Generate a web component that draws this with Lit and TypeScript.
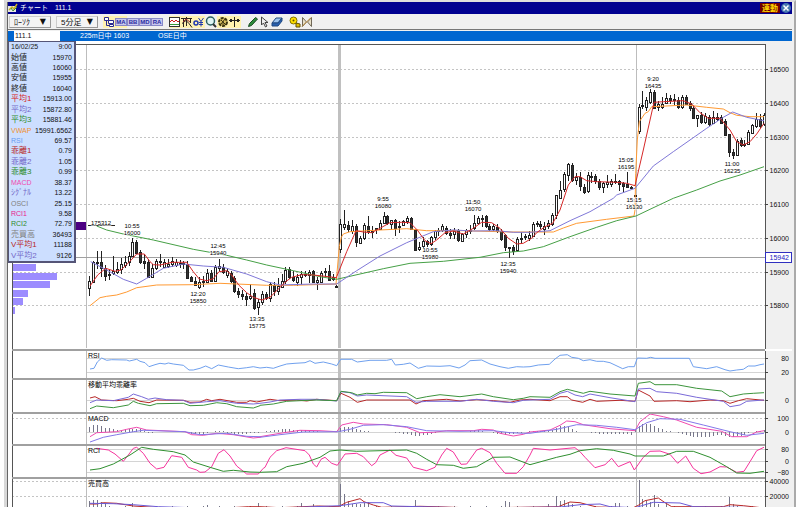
import { LitElement, html, svg, css } from "lit";
import { customElement, property } from "lit/decorators.js";
import { classMap } from "lit/directives/class-map.js";

type Point = [number, number];
// high, open, close, low
type Candle = [number, number, number, number];

interface Trace {
  color: string;
  // each block has its own origin, points are in thirds of a unit
  blocks: { origin: Point; points: Point[] }[];
}

interface Pane {
  title: string;
  top: number;
  height: number;
  dashed?: [number, string][];
  solid?: [number, string][];
  traces: Trace[];
  bars?: { zero: number; values: number[] };
}

const LEFT = 12;
const RIGHT = 765;
const WIDTH = 780;
const FIRST_BAR = 89.3;
const PITCH = 3.923;

const barX = (i: number) => FIRST_BAR + i * PITCH;
const priceY = (p: number) => 69.5 + (16500 - p) * 0.3375;

// "x,y x,y ..." to points
const pts = (s: string): Point[] =>
  s
    .trim()
    .split(/\s+/)
    .map(p => p.split(",").map(Number) as Point);

const trace = (color: string, ...blocks: [number, number, string][]): Trace => ({
  color,
  blocks: blocks.map(([x, y, s]) => ({ origin: [x, y], points: pts(s) })),
});

const linePoints = (t: Trace) =>
  t.blocks
    .flatMap(b =>
      b.points.map(
        ([x, y]) =>
          `${(b.origin[0] + x / 3).toFixed(1)},${(b.origin[1] + y / 3).toFixed(1)}`
      )
    )
    .join(" ");

// prices are stored as points below the session base
const SESSIONS: { base: number; candles: Candle[] }[] = [
  {
    base: 16174,
    candles: [
      [286, 322, 300, 345], [240, 303, 244, 303], [213, 246, 243, 265], [213, 243, 262, 290],
      [253, 262, 287, 300], [268, 279, 282, 299], [228, 277, 272, 283], [245, 272, 264, 280],
      [232, 265, 250, 280], [228, 252, 244, 262], [215, 244, 226, 255], [174, 226, 184, 230],
      [180, 184, 216, 222], [208, 216, 246, 250], [220, 240, 245, 265], [235, 245, 288, 290],
      [250, 288, 262, 292], [234, 262, 240, 268], [222, 240, 244, 260], [235, 258, 243, 262],
      [235, 257, 250, 262], [230, 250, 240, 260], [236, 252, 243, 258], [238, 246, 250, 262],
      [240, 252, 248, 265], [240, 250, 292, 295], [285, 290, 302, 305], [290, 300, 312, 315],
      [290, 317, 303, 325], [285, 302, 305, 318], [265, 304, 276, 308], [268, 276, 300, 304],
      [252, 300, 260, 303], [234, 262, 256, 275], [250, 260, 276, 280], [262, 285, 272, 292],
      [272, 278, 303, 308], [285, 292, 330, 335], [320, 330, 340, 352], [328, 340, 346, 358],
      [335, 346, 355, 375], [310, 350, 345, 358], [325, 337, 382, 388], [355, 376, 362, 400],
      [330, 364, 340, 372], [332, 340, 352, 358], [305, 352, 310, 364], [305, 312, 330, 345],
      [292, 330, 315, 342], [280, 318, 300, 322], [258, 302, 268, 310], [260, 265, 290, 296],
      [270, 290, 300, 305], [280, 302, 288, 315], [272, 288, 280, 312], [270, 284, 280, 290],
      [268, 282, 273, 306], [268, 272, 304, 306], [290, 304, 298, 328], [270, 302, 276, 308],
      [262, 276, 272, 290], [254, 270, 296, 300], [280, 290, 296, 300], [312, 314, 315, 316],
    ],
  },
  {
    base: 16173,
    candles: [
      [115, 205, 132, 218], [88, 140, 132, 148], [122, 135, 148, 155], [118, 152, 138, 160],
      [132, 138, 184, 198], [165, 186, 172, 190], [128, 172, 134, 178], [108, 136, 152, 160],
      [138, 152, 156, 172], [142, 146, 144, 160], [118, 146, 128, 150], [95, 126, 106, 130],
      [105, 108, 130, 135], [118, 132, 120, 148], [115, 120, 145, 165], [122, 136, 138, 158],
      [118, 134, 122, 138], [108, 124, 114, 130], [110, 114, 146, 150], [145, 148, 206, 212],
      [185, 205, 198, 210], [168, 196, 180, 206], [178, 182, 190, 200], [165, 190, 170, 195],
      [148, 170, 152, 178], [142, 152, 150, 165], [132, 150, 138, 155], [138, 142, 158, 162],
      [145, 158, 164, 175], [142, 160, 152, 175], [145, 150, 180, 184], [158, 180, 160, 185],
      [145, 160, 148, 172], [135, 152, 148, 160], [104, 144, 128, 150], [108, 128, 112, 135],
      [105, 112, 114, 140], [105, 108, 138, 142], [132, 138, 146, 152], [132, 146, 138, 152],
      [132, 140, 152, 158], [145, 152, 176, 180], [160, 164, 200, 212], [198, 200, 202, 232],
      [192, 200, 212, 222], [168, 206, 174, 212], [155, 172, 176, 186], [160, 168, 166, 178],
      [152, 170, 162, 180], [126, 166, 130, 170], [122, 128, 132, 140], [122, 132, 138, 146],
      [125, 145, 136, 162], [120, 138, 128, 145], [98, 130, 104, 136], [45, 104, 46, 115],
      [2, 55, 30, 56], [-23, 28, -16, 37], [-50, -16, -48, 2], [-50, -44, 0, 7],
      [-20, 2, -8, 16], [-22, -8, 18, 32], [12, 20, 34, 42], [-22, 34, -13, 40],
      [-22, -12, -10, 8], [-16, -10, 6, 12], [-3, 4, 22, 30], [7, 22, 10, 38],
      [-14, 10, 5, 25], [-4, 12, 4, 22], [-18, 6, 2, 12], [0, 4, 14, 34],
      [7, 10, 18, 38], [-22, 12, 20, 24], [18, 20, 22, 26], [44, 45, 46, 47],
    ],
  },
  {
    base: 16588,
    candles: [
      [190, 272, 200, 280], [152, 196, 192, 205], [170, 198, 178, 210], [145, 184, 154, 190],
      [150, 154, 200, 205], [180, 200, 190, 212], [170, 198, 190, 205], [158, 186, 172, 190],
      [165, 172, 178, 190], [162, 176, 178, 192], [168, 178, 200, 204], [165, 200, 170, 204],
      [165, 168, 188, 192], [180, 188, 204, 210], [195, 202, 232, 236], [225, 234, 224, 258],
      [215, 224, 246, 250], [218, 244, 226, 250], [222, 228, 250, 255], [212, 246, 228, 250],
      [218, 230, 236, 240], [222, 228, 246, 250], [235, 240, 282, 285], [278, 280, 332, 348],
      [325, 332, 340, 353], [295, 342, 300, 345], [290, 296, 310, 318], [298, 308, 310, 318],
      [268, 308, 272, 312], [248, 275, 252, 280], [218, 256, 236, 262], [220, 234, 256, 260],
      [218, 250, 224, 255],
    ],
  },
];

const MAIN_TRACES: Trace[] = [
  trace("#ff9a33",
    [80, 180, "30,377 60,353 80,349 110,345 140,336 170,323 230,315 340,314 420,310 560,316 640,316 770,312"],
    [330, 180, "18,312 28,200 34,172 40,162 60,155 150,150 230,146 290,152 400,152 540,156 670,156 700,144 740,130 830,118 912,108"],
    [540, 40, "285,510 287,400 292,300 298,245 315,220 325,215 335,200 440,195 500,202 550,207 570,218 590,226 630,230 672,230"]),
  trace("#46a046",
    [80, 180, "50,138 80,150 130,162 220,180 340,208 440,226 500,240 560,255 640,272 720,290 770,298"],
    [330, 180, "20,298 90,282 160,266 240,250 340,244 450,232 520,218 580,213 640,200 720,170 800,142 860,122 918,108"],
    [540, 40, "330,508 400,475 470,450 540,423 600,405 672,380"]),
  trace("#8078d8",
    [80, 180, "32,245 80,270 130,298 170,312 200,295 250,265 310,252 370,258 430,262 500,282 560,305 600,315 700,312 770,312"],
    [330, 180, "20,312 80,272 150,228 230,188 310,155 370,150 430,153 500,152 550,157 600,157 660,152 720,122 780,95 850,55"],
    [540, 40, "230,465 285,445 340,378 400,335 450,300 500,265 550,232 578,216 620,232 672,242"]),
  trace("#d62828",
    [80, 180, "30,318 53,285 77,265 105,274 123,270 147,247 170,222 193,222 210,245 220,254 240,255 276,247 320,247 340,275 358,297 380,302 400,296 417,275 440,272 455,285 476,315 500,338 520,352 545,360 570,352 590,332 617,305 635,292 665,284 700,285 735,289 770,293"],
    [330, 180, "20,290 50,215 78,152 100,156 125,158 150,145 180,128 215,127 240,128 262,150 285,182 303,191 320,180 345,158 370,153 400,162 430,145 455,127 485,128 510,145 535,175 560,192 580,190 605,175 620,158 645,140 668,130 690,90"],
    [540, 40, "60,510 85,435 105,410 120,410 140,422 170,425 230,427 260,430 285,437 310,330 342,187 370,185 430,182 455,192 480,218 505,235 540,235 570,270 590,305 610,315 630,305 650,282 672,250"]),
];

// centre x, baseline, time, price
const MARKS: [number, number, string, string][] = [
  [132, 228, "10:55", "16000"],
  [218, 248, "12:45", "15940"],
  [198, 296, "12:20", "15850"],
  [257, 321, "13:35", "15775"],
  [383, 201, "9:55", "16080"],
  [473, 204, "11:50", "16070"],
  [430, 252, "10:55", "15980"],
  [508, 266, "12:35", "15940"],
  [634, 202, "15:15", "16130"],
  [626, 162, "15:05", "16195"],
  [653, 81, "9:20", "16435"],
  [732, 166, "11:00", "16235"],
];

const PROFILE = [24, 45, 38, 16, 11, 3];

const RSI = trace("#6fa0ee",
  [0, 340, "270,87 282,85 292,66 305,54 320,61 335,59 380,60 388,63 410,58 420,64 435,68 447,80 465,74 480,70 495,72 505,69 520,72 550,76 567,90 580,90 600,85 617,78 635,86 655,75 685,81 715,86 740,83 760,80 780,84"],
  [260, 340, "0,84 20,82 40,85 60,78 80,72 105,70 135,68 150,62 165,70 190,66 215,72 230,77 242,58 275,58 292,66 330,61 380,61 395,58 406,75 430,73 450,69 475,85 500,78 540,79 570,77 597,84 615,75 630,62 665,60 690,72 720,80 745,85 770,80 790,81"],
  [530, 340, "0,80 25,75 58,73 75,57 90,46 112,44 125,52 145,55 160,62 180,59 200,64 220,64 240,68 278,86 295,80 313,80 322,54 350,55 362,52 375,55 478,55 490,80 530,86 560,80 585,89 600,93 620,90 640,88 655,78 675,78 690,74 702,72"]);

const KAIRI = [
  trace("#b82828",
    [0, 340, "270,174 285,170 305,180 350,182 385,178 400,175 420,184 447,188 470,180 550,181 570,187 600,186 620,178 635,182 660,178 710,187 740,187 750,182 770,186 800,180"],
    [260, 340, "30,178 60,182 110,180 140,183 170,178 230,182 243,160 270,172 292,187 320,180 450,180 468,192 490,182 560,178 600,183 650,179 700,182 750,187 780,180"],
    [530, 340, "0,178 60,182 90,170 112,170 125,180 158,187 180,178 200,184 270,181 315,184 325,150 360,168 372,184 440,182 480,185 540,180 580,182 600,190 625,182 650,176 702,181"]),
  trace("#7a6ad8",
    [0, 340, "270,188 290,180 340,182 385,172 400,162 425,170 445,178 465,174 500,179 550,181 570,190 620,185 660,182 710,190 760,192 780,190"],
    [260, 340, "0,190 30,186 60,180 120,178 170,178 230,183 243,155 270,158 292,168 320,165 440,170 468,187 500,184 600,184 650,178 700,184 760,188 790,181"],
    [530, 340, "0,180 60,178 90,160 112,154 135,165 158,170 180,162 240,173 315,185 325,147 360,145 380,155 440,160 500,172 580,184 600,200 630,195 650,184 702,180"]),
  trace("#3c943c",
    [0, 340, "270,206 290,198 340,203 385,195 400,184 415,190 450,197 470,191 550,190 570,197 610,196 650,188 680,191 710,200 760,204 780,197"],
    [260, 340, "0,196 40,192 80,184 120,182 170,180 230,182 243,154 275,158 292,165 320,160 345,161 370,157 440,158 470,176 500,170 540,164 600,170 665,162 700,170 760,179 790,175"],
    [530, 340, "0,170 60,172 90,155 112,148 160,160 180,154 240,162 315,168 325,130 360,125 375,134 440,134 500,145 575,153 600,170 640,162 670,160 702,158"]),
];

const MACD = [
  trace("#f04ab0",
    [0, 340, "270,290 290,278 350,275 380,268 410,262 440,270 555,275 575,284 610,286 650,280 700,284 760,294 780,292"],
    [260, 340, "0,290 60,280 120,271 180,272 230,275 245,255 280,247 310,252 380,254 440,262 480,278 520,277 560,272 640,272 665,268 700,270 720,280 760,288 790,283"],
    [530, 340, "0,276 60,270 90,256 110,243 135,245 160,254 240,266 315,272 330,245 360,222 400,230 440,240 500,262 575,274 605,290 650,290 680,276 702,272"]),
  trace("#8478ea",
    [0, 340, "270,306 310,292 350,284 400,275 430,271 555,275 600,284 680,280 740,289 780,290"],
    [260, 340, "0,292 60,284 130,276 235,275 270,268 310,256 370,254 440,260 500,272 600,274 700,272 750,278 790,280"],
    [530, 340, "0,280 80,268 140,254 200,256 260,262 315,269 350,248 390,236 450,238 520,255 600,275 650,286 702,280"]),
];

const RCI = [
  trace("#f5349c",
    [0, 340, "290,325 325,330 345,342 370,364 385,345 400,325 410,322 430,340 450,370 470,387 492,382 515,347 545,352 565,382 590,390 600,397 615,396 635,380 655,340 672,329 690,348 710,378 740,402 775,402 790,385"],
    [260, 340, "15,382 30,352 50,332 78,323 135,332 148,345 160,372 170,381 183,358 195,352 215,370 232,376 255,342 290,340 310,350 335,377 347,368 360,345 390,330 408,346 440,354 460,382 500,392 525,382 545,345 560,325 580,336 603,373 620,372 650,330 665,325 690,338 710,370 735,400 770,400 790,380"],
    [530, 340, "0,345 10,325 60,330 135,323 150,335 165,352 195,383 225,374 245,355 265,380 300,365 313,390 340,352 360,334 390,333 420,343 443,370 467,348 490,385 513,401 540,396 570,380 590,381 620,397 642,394 660,365 680,332 702,322"]),
  trace("#2f8f2f",
    [0, 340, "270,390 300,386 340,372 390,345 425,322 460,328 520,335 555,345 580,366 630,382 670,394 700,391 750,396"],
    [260, 340, "0,397 50,395 80,380 130,370 180,352 210,333 240,330 290,334 440,330 470,340 500,358 530,374 580,376 610,385 650,380 700,352 750,351"],
    [530, 340, "0,374 80,352 120,343 150,332 200,326 250,331 300,342 315,348 400,348 440,334 490,334 540,352 590,380 620,399 660,400 702,394"]),
];

const VOLUME = [
  trace("#b82828",
    [0, 340, "270,492 290,492 310,488 350,490 400,498 460,502 640,506 745,500"],
    [260, 340, "0,500 60,503 175,498 235,500 260,487 300,476 312,485 340,495 365,502 480,499 525,500 640,504"],
    [530, 340, "85,500 120,486 150,488 165,492 200,501 310,503 325,496 345,482 385,474 405,488 425,500 580,500 600,494 640,497 702,504"]),
  trace("#6a5ad8",
    [0, 340, "270,490 340,491 400,494 475,500 640,505"],
    [260, 340, "60,504 240,497 300,488 370,488 395,498 480,500 640,504"],
    [530, 340, "90,501 150,494 210,492 240,500 315,503 335,497 370,487 450,489 490,500 702,503"]),
];

const MACD_BARS = [
  5, 7, 7, 6, 4, 4, 3, 2, 2, 3, 3, 3, 3, 3, 1, -1, -1, 0, 0, 0, 0, 0, 0, 0, 0, -1, -2, -2, -2, -2, -1, 0,
  1, 1, 1, -1, -1, -2, -2, -2, -2, -1, -1, -1, 0, 1, 1, 2, 2, 3, 3, 3, 2, 2, 2, 2, 1, 1, 1, 0, 0, 0, 0, 1,
  4, 5, 5, 5, 3, 2, 1, 1, 0, 0, 0, 0, 0, 0, -1, -1, -2, -2, -3, -4, -4, -3, -3, -2, -1, 0, 0, 0, 0, 0, 0,
  0, 0, 1, 1, 2, 1, 0, 0, -1, -2, -2, -3, -2, -2, -1, -1, 0, 1, 1, 1, 1, 1, 1, 2, 4, 6, 6, 5, 3, 1, 0, 0,
  0, -1, -1, -2, -2, -2, -2, -2, -2, -2, -2, -3, 3, 6, 8, 8, 8, 6, 4, 3, 1, 1, 0, -1, -2, -3, -4, -5, -5,
  -5, -5, -5, -4, -3, -3, -4, -5, -5, -4, -4, -3, -1, 0, 1, 1, 2,
];

// sparse: bar index to height
const VOLUME_PEAKS: Record<number, number> = {
  0: 11, 1: 12, 2: 12, 3: 10, 4: 9, 11: 9, 30: 7, 43: 9, 54: 9, 57: 8, 64: 28, 65: 18, 66: 11, 67: 8,
  68: 8, 69: 8, 70: 9, 71: 10, 83: 12, 106: 11, 107: 10, 117: 8, 119: 16, 120: 11, 121: 12, 122: 9,
  123: 8, 134: 9, 135: 9, 140: 32, 141: 13, 142: 11, 143: 10, 144: 17, 145: 8, 147: 8, 163: 15, 164: 8,
};

const PANES: Pane[] = [
  { title: "RSI", top: 351, height: 29, solid: [[358.5, "80"], [372.5, "20"]], traces: [RSI] },
  { title: "移動平均乖離率", top: 380, height: 34, solid: [[400.5, "0"]], traces: KAIRI },
  {
    title: "MACD", top: 414, height: 32, dashed: [[418.5, "100"]], solid: [[432.5, "0"]], traces: MACD,
    bars: { zero: 432, values: MACD_BARS },
  },
  { title: "RCI", top: 446, height: 33, solid: [[449.5, "80"], [461.5, "0"], [472.5, "−80"]], traces: RCI },
  {
    title: "売買高", top: 479, height: 34, dashed: [[481.5, "40000"], [496.5, "20000"]], traces: VOLUME,
    bars: {
      zero: 512,
      values: Array.from({ length: 173 }, (_, i) => VOLUME_PEAKS[i] ?? 3 + ((i * 7) % 4)),
    },
  },
];

const renderTrace = (t: Trace) =>
  svg`<polyline class="trace" stroke=${t.color} points=${linePoints(t)} />`;

const sessionLines = (top: number, bottom: number) => svg`
  <line class="session" x1="86.5" x2="86.5" y1=${top} y2=${bottom} />
  <line class="session day" x1="339.5" x2="339.5" y1=${top} y2=${bottom} />
  <line class="session" x1="636.5" x2="636.5" y1=${top} y2=${bottom} />
`;

const axisBox = (top: number, height: number) => svg`
  <rect class="axis-bg" x=${RIGHT + 1} y=${top} width="26" height=${height} />
  <line class="edge" x1=${RIGHT + 0.5} x2=${RIGHT + 0.5} y1=${top} y2=${top + height} />
`;

const axisLabel = (y: number, label: string) => svg`
  <line class="tick" x1=${RIGHT} x2=${RIGHT + 3} y1=${y} y2=${y} />
  <text class="axis" x="789" y=${Math.round(y + 2)}>${label}</text>
`;

@customElement("main-chart")
class MainChart extends LitElement {
  static styles = css`
    :host {
      display: block;
    }
    svg {
      display: block;
      width: 100%;
      font-family: "Liberation Sans", Arial, sans-serif;
    }
    line,
    rect {
      shape-rendering: crispEdges;
    }
    .grid {
      stroke: #c4c4c4;
      stroke-dasharray: 2 2;
    }
    .session {
      stroke: #bdbdbd;
    }
    .day {
      stroke: #c0c0c0;
      stroke-width: 3px;
    }
    .cross {
      stroke: #a0a0a0;
    }
    .edge {
      stroke: #555;
    }
    .split {
      stroke: #a0a0a0;
      stroke-width: 2px;
    }
    .axis-bg {
      fill: #f0f0f0;
    }
    .tick {
      stroke: #444;
    }
    .axis {
      font-size: 7px;
      text-anchor: end;
      fill: #111;
    }
    .tag {
      fill: #fff;
      stroke: #3030c0;
    }
    .axis.current {
      fill: #2020c0;
    }
    .trace {
      fill: none;
      stroke-width: 1px;
    }
    .candle {
      stroke: #222;
      fill: #fff;
    }
    .candle.down {
      fill: #333;
    }
    .mark {
      font-size: 6px;
      text-anchor: middle;
      fill: #000;
      stroke: #fff;
      stroke-width: 1px;
      paint-order: stroke;
    }
    .profile {
      fill: #9c8cff;
    }
    .poc {
      fill: #4b0082;
    }
    .poc-line {
      stroke: #222;
    }
  `;

  renderCandle([high, open, close, low]: Candle, base: number, index: number) {
    const x = Math.round(barX(index)) + 0.5;
    const top = priceY(base - Math.min(open, close));
    const bottom = priceY(base - Math.max(open, close));
    return svg`<g class=${close > open ? "candle down" : "candle"}>
      <line x1=${x} x2=${x} y1=${priceY(base - high)} y2=${priceY(base - low)} />
      <rect x=${x - 1} y=${Math.round(top) + 0.5} width="2" height=${Math.max(0.5, Math.round(bottom - top))} />
    </g>`;
  }

  render() {
    let index = 0;
    const candles = SESSIONS.map(s =>
      s.candles.map(c => this.renderCandle(c, s.base, index++))
    );
    const levels = [16500, 16400, 16300, 16200, 16100, 16000, 15900, 15800];

    return html`
      <svg viewBox="${LEFT} 44 ${WIDTH} 307" role="img" aria-label="225m日中 1603">
        ${levels.map(
          p => svg`<line class="grid" x1=${LEFT} x2=${RIGHT} y1=${Math.floor(priceY(p)) + 0.5} y2=${Math.floor(priceY(p)) + 0.5} />`
        )}
        ${sessionLines(44, 348)}
        <line class="cross" x1=${LEFT} x2=${RIGHT} y1="257.5" y2="257.5" />
        ${PROFILE.map(
          (w, i) => svg`<rect class="profile" x=${LEFT} y=${264 + i * 8.5} width=${w} height="7" />`
        )}
        <rect class="poc" x="76" y="222" width="10" height="8" />
        <line class="poc-line" x1="88" x2="115" y1="225.5" y2="225.5" />
        ${candles} ${MAIN_TRACES.map(renderTrace)}
        <text class="mark" x="101" y="225">175312</text>
        ${MARKS.map(
          ([x, y, time, price]) => svg`
            <text class="mark" x=${x} y=${y}>${time}</text>
            <text class="mark" x=${x} y=${y + 7}>${price}</text>
          `
        )}
        ${axisBox(44, 305)}
        ${levels.map(p => axisLabel(Math.floor(priceY(p)) + 0.5, String(p)))}
        <rect class="tag" x="765.5" y="252.5" width="26" height="10" />
        <text class="axis current" x="789" y="260">15942</text>
        <line class="edge" x1=${LEFT} x2=${RIGHT} y1="44.5" y2="44.5" />
        <line class="edge" x1=${LEFT + 0.5} x2=${LEFT + 0.5} y1="44" y2="349" />
        <line class="split" x1=${LEFT} x2=${RIGHT} y1="350" y2="350" />
      </svg>
    `;
  }
}

@customElement("indicator-pane")
class IndicatorPane extends LitElement {
  static styles = [
    MainChart.styles,
    css`
      .title {
        font-family: "Liberation Sans", "Noto Sans CJK JP", sans-serif;
        font-size: 7px;
        fill: #000;
      }
      .level {
        stroke: #d4d4d4;
      }
      .bar {
        fill: #77778a;
      }
    `,
  ];

  @property({ attribute: false }) pane!: Pane;

  render() {
    const { title, top, height, dashed = [], solid = [], traces, bars } = this.pane;
    const bottom = top + height;

    return html`
      <svg viewBox="${LEFT} ${top} ${WIDTH} ${height}" role="img" aria-label=${title}>
        ${dashed.map(([y]) => svg`<line class="grid" x1=${LEFT} x2=${RIGHT} y1=${y} y2=${y} />`)}
        ${solid.map(([y]) => svg`<line class="level" x1="87" x2=${RIGHT} y1=${y} y2=${y} />`)}
        ${sessionLines(top, bottom)}
        ${bars?.values.map(
          (v, i) => svg`<rect class="bar" x=${Math.round(barX(i))} y=${bars.zero - Math.max(v, 0)} width="1" height=${Math.abs(v)} />`
        )}
        ${traces.map(renderTrace)}
        <text class="title" x="88" y=${top + 7}>${title}</text>
        ${axisBox(top, height)}
        ${[...dashed, ...solid].map(([y, label]) => axisLabel(y, label))}
        <line class="edge" x1=${LEFT + 0.5} x2=${LEFT + 0.5} y1=${top} y2=${bottom} />
        <line class="split" x1=${LEFT} x2=${RIGHT} y1=${bottom - 1} y2=${bottom - 1} />
      </svg>
    `;
  }
}

const QUOTE: [string, string, string][] = [
  ["16/02/25", "9:00", "ink"],
  ["始値", "15970", "ink"],
  ["高値", "16060", "ink"],
  ["安値", "15955", "ink"],
  ["終値", "16040", "ink"],
  ["平均1", "15913.00", "red"],
  ["平均2", "15872.80", "violet"],
  ["平均3", "15881.46", "green"],
  ["VWAP", "15991.6562", "orange"],
  ["RSI", "69.57", "blue"],
  ["乖離1", "0.79", "brick"],
  ["乖離2", "1.05", "violet"],
  ["乖離3", "0.99", "green"],
  ["MACD", "38.37", "pink"],
  ["ｼｸﾞﾅﾙ", "13.22", "violet"],
  ["OSCI", "25.15", "grey"],
  ["RCI1", "9.58", "magenta"],
  ["RCI2", "72.79", "green"],
  ["売買高", "36493", "grey"],
  ["V平均1", "11188", "brick"],
  ["V平均2", "9126", "violet"],
];

const letters = (s: string) => svg`
  <rect x="0.5" y="2.5" width="11" height="7" fill="#c8c8ee" stroke="#8888c8" />
  <text class="glyph" x="6" y="8">${s}</text>
`;

const ICONS = {
  tree: svg`
    <path d="M1.500 1.500h4v3h-4zM5.500 4.500h5v3h-5zM6.500 8.500h4v2h-4z" fill="#fff" stroke="#2a2a90" />
    <path d="M3.500 5v4.500h3" fill="none" stroke="#2a2a90" />`,
  ma: letters("MA"),
  bb: letters("BB"),
  macd: letters("MD"),
  ra: letters("RA"),
  wave: svg`
    <rect x="0.5" y="1.500" width="10" height="9" fill="#fff" stroke="#333" />
    <path d="M1 6l2-2 2 2 2-2 2 2 1-1" fill="none" stroke="#d02020" />
    <path d="M1 8.500h9" stroke="#3a9a3a" />`,
  compare: svg`
    <path d="M0 2.500h11M5.500 1v9M2.500 2v9M9.500 2v5M1 7.500l4-3 3 3 3 4" fill="none" stroke="#2c2420" />
    <path d="M2 6l3-3 4 3" fill="none" stroke="#a03030" />`,
  yen: svg`
    <circle cx="3" cy="7" r="2" fill="none" stroke="#2038b0" stroke-width="1.500" />
    <path d="M5.500 2l2.500 3.500 2.500-3.500M8 5.500v5M6 6.500h4M6 8.500h4" fill="none" stroke="#2038b0" />`,
  zoom: svg`
    <circle cx="5.500" cy="5" r="4" fill="#dff4f4" stroke="#2a6060" stroke-width="1.500" />
    <path d="M8 8l3 3" stroke="#333" stroke-width="2" />`,
  gear: svg`
    <circle cx="6" cy="6" r="4" fill="#d8c060" stroke="#3a3410" stroke-width="2" stroke-dasharray="3 1" />
    <path d="M4 4l5 5M8 3l-4 5M6 5v4" stroke="#3a3410" />`,
  cross: svg`
    <path d="M5.500 1v10M0 4.500h11" stroke="#222" />
    <path d="M9 3v3M2 3v3" stroke="#222" stroke-width="2" />`,
  pen: svg`<path d="M1.500 10.500l1-3 6-6 2 1.500-6 6.500z" fill="#2c8c3c" stroke="#1c4c24" />`,
  arrow: svg`<path d="M2.500 1v8l2-2 2 4 1.500-1-2-3.500h3z" fill="#eee" stroke="#444" />`,
  eraser: svg`
    <path d="M1 7l4-5h6l-4 5z" fill="#9cc4f0" stroke="#204880" />
    <path d="M1 7h6l4-5v3l-4 5h-6z" fill="#2860b0" stroke="#204880" />`,
  bulb: svg`
    <circle cx="4.500" cy="4.500" r="3.500" fill="#ffe000" stroke="#807000" />
    <path d="M7 7l4 1v3h-4z" fill="#e0c000" stroke="#605000" />
    <circle cx="4.500" cy="4.500" r="1" fill="#605000" />`,
  mirror: svg`
    <path d="M1.500 1.500l4 4.500-4 4.500zM10.500 1.500l-4 4.500 4 4.500z" fill="#e8e0c8" stroke="#706858" />
    <path d="M1 10.500l9-9" stroke="#c09040" />`,
};

const TOOLS: [keyof typeof ICONS, string, boolean?][][] = [
  [["tree", "ツリー", true], ["ma", "MA", true], ["bb", "BB"], ["macd", "MACD"], ["ra", "RA"]],
  [
    ["wave", "サブチャート", true],
    ["compare", "比較", true],
    ["yen", "価格", true],
    ["zoom", "拡大"],
    ["gear", "設定", true],
    ["cross", "十字線", true],
  ],
  [["pen", "描画"], ["arrow", "選択"], ["eraser", "消去"]],
  [["bulb", "アラート"], ["mirror", "反転"]],
];

@customElement("app-root")
class AppRoot extends LitElement {
  static styles = css`
    :host {
      display: block;
      height: 100vh;
      overflow: hidden;
      background: #fff;
      font-family: "Liberation Sans", "Noto Sans CJK JP", sans-serif;
      font-size: 7px;
      line-height: 10px;
      color: #222;
    }

    * {
      box-sizing: border-box;
    }

    .window {
      min-height: 100%;
      margin: 0 4px;
      padding-right: 2px;
      border-top: 2px solid #ddd;
      border-left: 3px solid #d8d8d8;
      border-right: 2px solid #aaa;
      background: #f0f0f0;
    }

    .frame {
      border-left: 1px solid #666;
    }

    .title-bar {
      display: flex;
      align-items: center;
      height: 12px;
      padding-right: 1px;
      background: #000090;
      color: #fff;
    }

    .title-bar h1 {
      flex: 1;
      display: flex;
      gap: 7px;
      margin: 0;
      padding-left: 2px;
      font-size: 7px;
      font-weight: normal;
    }

    .title-bar svg {
      display: block;
      width: 10px;
      height: 10px;
    }

    .title-bar button {
      height: 10px;
      padding: 0;
      border: none;
      background: none;
    }

    .title-bar .link {
      width: 20px;
      margin-right: 1px;
      background: #700000;
      color: #ffd800;
      font: bold 8px/10px "Noto Sans CJK JP", sans-serif;
    }

    .toolbar {
      display: flex;
      align-items: center;
      height: 16px;
      padding: 1px 0 0 1px;
      border-bottom: 1px solid #777;
    }

    .picker {
      position: relative;
      margin-right: 5px;
    }

    .picker select {
      display: block;
      width: 42px;
      height: 12px;
      padding: 0 0 0 4px;
      border: 1px solid #999;
      border-top-color: #ccc;
      border-left-color: #ccc;
      border-radius: 0;
      background: #f4f4f4;
      appearance: none;
      color: #111;
      font: inherit;
      font-size: 8px;
      line-height: 9px;
    }

    .picker::after {
      content: "▼";
      position: absolute;
      top: 1px;
      right: 5px;
      pointer-events: none;
      font-family: "DejaVu Sans", sans-serif;
      font-size: 8px;
      color: #111;
    }

    .tools {
      display: flex;
      margin-right: 6px;
    }

    .tools button {
      display: block;
      width: 12px;
      height: 12px;
      padding: 0;
      border: none;
      background: none;
    }

    .tools button.active {
      background: #fff2b0;
    }

    .tools svg {
      display: block;
      width: 12px;
      height: 12px;
    }

    .glyph {
      font: bold 6px "Liberation Sans", sans-serif;
      text-anchor: middle;
      fill: #2a2aa0;
    }

    .symbol-bar {
      display: flex;
      align-items: center;
      height: 10px;
      margin-top: 1px;
      padding-left: 6px;
      background: #0066d0;
      color: #fff;
    }

    .symbol-bar input {
      width: 46px;
      height: 10px;
      padding: 0 1px;
      border: none;
      background: #fff;
      color: #111;
      font: inherit;
    }

    .symbol-bar .name {
      width: 78px;
      margin-left: 20px;
    }

    .charts {
      position: relative;
      padding: 3px 0 0 4px;
      background: linear-gradient(90deg, #fff 50%, #f0f0f0 98%);
    }

    main-chart,
    indicator-pane {
      background: #fff;
    }

    .quote {
      position: absolute;
      top: 0;
      left: 0;
      width: 68px;
      height: 222px;
      display: grid;
      grid-template-columns: 100%;
      grid-auto-rows: 1fr;
      margin: 0;
      padding: 0 2px;
      border: 1px solid #557;
      border-right-width: 2px;
      border-bottom-width: 2px;
      background: #ccdeff;
    }

    .quote div {
      display: flex;
      justify-content: space-between;
      align-items: center;
      min-height: 0;
    }

    .quote dt.kanji {
      font-size: 8px;
    }

    .quote dd {
      margin: 0;
      color: #111;
    }

    .ink { color: #222; }
    .red { color: #d82020; }
    .brick { color: #b82828; }
    .violet { color: #7468c8; }
    .green { color: #2c8c2c; }
    .orange { color: #f09030; }
    .blue { color: #6a9cf0; }
    .pink { color: #f048b0; }
    .magenta { color: #e8208c; }
    .grey { color: #808080; }
  `;

  render() {
    return html`
      <div class="window">
        <div class="frame">
          <header class="title-bar">
            <svg viewBox="0 0 10 10">
              <rect x="0" y="3" width="8" height="6" fill="#e8e8e0" />
              <path d="M1 7l3-3 2 2 3-5" fill="none" stroke="#c8b020" stroke-width="1.500" />
              <path d="M3 5l2 3 4-4" fill="none" stroke="#409040" />
            </svg>
            <h1><span>チャート</span><span>111.1</span></h1>
            <button class="link">連動</button>
            <button class="close" aria-label="閉じる">
              <svg viewBox="0 0 10 10">
                <circle cx="5" cy="5" r="5" fill="#4878b0" />
                <path d="M2.500 2.500l5 5M7.500 2.500l-5 5" stroke="#fff" stroke-width="1.500" />
              </svg>
            </button>
          </header>

          <div class="toolbar">
            <label class="picker">
              <select aria-label="チャート種別"><option>ﾛｰｿｸ</option></select>
            </label>
            <label class="picker">
              <select aria-label="足種"><option>5分足</option></select>
            </label>
            ${TOOLS.map(
              group => html`<div class="tools">
                ${group.map(
                  ([icon, label, active]) => html`<button
                    class=${classMap({ active: !!active })}
                    aria-label=${label}
                  >
                    <svg viewBox="0 0 12 12">${ICONS[icon]}</svg>
                  </button>`
                )}
              </div>`
            )}
          </div>

          <div class="symbol-bar">
            <input type="text" aria-label="銘柄コード" value="111.1" />
            <span class="name">225m日中 1603</span>
            <span>OSE日中</span>
          </div>

          <div class="charts">
            <main-chart></main-chart>
            ${PANES.map(p => html`<indicator-pane .pane=${p}></indicator-pane>`)}
            <dl class="quote">
              ${QUOTE.map(
                ([label, value, tone]) => html`<div>
                  <dt class=${classMap({ [tone]: true, kanji: /[^\x00-\x7f]/.test(label) })}>${label}</dt>
                  <dd>${value}</dd>
                </div>`
              )}
            </dl>
          </div>
        </div>
      </div>
    `;
  }
}

export { AppRoot, MainChart, IndicatorPane };
